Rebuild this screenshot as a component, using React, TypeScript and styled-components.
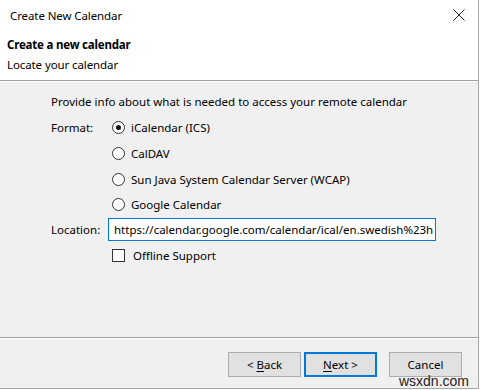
import styled, { createGlobalStyle } from "styled-components";

const GlobalStyle = createGlobalStyle`
  html, body {
    margin: 0;
    padding: 0;
    background: #ffffff;
  }
  body {
    font-family: "Noto Sans", "Open Sans", sans-serif;
    font-size: 11.5px;
    color: #000;
  }
`;

const Window = styled.div`
  position: relative;
  width: 478px;
  height: 388px;
  border-right: 1px solid #a8a8a8;
  border-bottom: 1px solid #a8a8a8;
  background: #f0f0f0;
  display: flex;
  flex-direction: column;
  overflow: hidden;
`;

const TitleBar = styled.div`
  height: 30px;
  background: #fff;
  display: flex;
  align-items: center;
  justify-content: space-between;
  padding: 0 8px 0 10px;
`;

const Title = styled.span`
  letter-spacing: -0.1px;
`;

const CloseButton = styled.div`
  width: 14px;
  height: 14px;
  display: flex;
  align-items: center;
  justify-content: center;
  margin-right: 4px;
`;

const Header = styled.div`
  background: #fff;
  height: 50px;
  padding-left: 7px;
  display: flex;
  flex-direction: column;
  justify-content: center;
  gap: 4px;
  border-bottom: 1px solid #a0a0a0;
  box-shadow: 0 1px 0 #ffffff;
`;

const HeaderLine = styled.div<{ $bold?: boolean }>`
  line-height: 16px;
  font-weight: ${(p) => (p.$bold ? 700 : 400)};
  letter-spacing: ${(p) => (p.$bold ? "-0.2px" : "-0.1px")};
`;

const Body = styled.div`
  flex: 1;
  padding: 13px 0 0 51px;
  display: flex;
  flex-direction: column;
`;

const Intro = styled.div`
  line-height: 16px;
  margin-bottom: 4px;
`;

const FormGrid = styled.div`
  display: grid;
  grid-template-columns: 57px 1fr;
  align-items: center;
`;

const FieldLabel = styled.div<{ $h: number }>`
  height: ${(p) => p.$h}px;
  display: flex;
  align-items: center;
`;

const Option = styled.label<{ $h: number }>`
  height: ${(p) => p.$h}px;
  display: flex;
  align-items: center;
  gap: 6px;
  padding-left: 4px;
`;

const Radio = styled.span<{ $checked?: boolean }>`
  width: 11px;
  height: 11px;
  border: 1px solid #333;
  border-radius: 50%;
  background: #fff;
  display: flex;
  align-items: center;
  justify-content: center;

  &::after {
    content: "";
    width: 5px;
    height: 5px;
    border-radius: 50%;
    background: ${(p) => (p.$checked ? "#111" : "transparent")};
  }
`;

const Checkbox = styled.span`
  width: 11px;
  height: 11px;
  border: 1px solid #333;
  background: #fff;
  margin-right: 2px;
`;

const Input = styled.div`
  width: 321px;
  height: 21px;
  border: 1px solid #0078d7;
  background: #fff;
  display: flex;
  align-items: center;
  padding-left: 5px;
  box-sizing: content-box;
  white-space: nowrap;
  overflow: hidden;
`;

const Footer = styled.div`
  height: 51px;
  border-top: 1px solid #a0a0a0;
  box-shadow: inset 0 1px 0 #ffffff;
  display: flex;
  justify-content: flex-end;
  align-items: flex-start;
  padding: 14px 16px 0 0;
  box-sizing: border-box;
`;

const ButtonGroup = styled.div`
  display: flex;
  gap: 3px;
  margin-right: 12px;
`;

const Button = styled.div<{ $default?: boolean }>`
  width: 73px;
  height: 25px;
  box-sizing: border-box;
  background: #e1e1e1;
  border: ${(p) => (p.$default ? "2px solid #0078d7" : "1px solid #adadad")};
  display: flex;
  align-items: center;
  justify-content: center;

  u {
    text-underline-offset: 2px;
  }
`;

const Watermark = styled.div`
  position: absolute;
  right: 9px;
  bottom: 0;
  font-family: "Liberation Sans", Arial, sans-serif;
  font-size: 14px;
  color: #222;
  line-height: 13px;
`;

const formats = [
  "iCalendar (ICS)",
  "CalDAV",
  "Sun Java System Calendar Server (WCAP)",
  "Google Calendar",
];

export default function App() {
  return (
    <>
      <GlobalStyle />
      <Window>
        <TitleBar>
          <Title>Create New Calendar</Title>
          <CloseButton>
            <svg width="12" height="12" viewBox="0 0 12 12">
              <path d="M0.5 0.5 L11.5 11.5 M11.5 0.5 L0.5 11.5" stroke="#222" strokeWidth="1" />
            </svg>
          </CloseButton>
        </TitleBar>
        <Header>
          <HeaderLine $bold>Create a new calendar</HeaderLine>
          <HeaderLine>Locate your calendar</HeaderLine>
        </Header>
        <Body>
          <Intro>Provide info about what is needed to access your remote calendar</Intro>
          <FormGrid>
            {formats.map((f, i) => (
              <>
                {i === 0 ? <FieldLabel key="fmt" $h={26}>Format:</FieldLabel> : <div key={f + "-l"} />}
                <Option key={f} $h={i === 3 ? 25 : 26}>
                  <Radio $checked={i === 0} />
                  {f}
                </Option>
              </>
            ))}
            <FieldLabel $h={25}>Location:</FieldLabel>
            <Input>https://calendar.google.com/calendar/ical/en.swedish%23h</Input>
            <div />
            <Option $h={26}>
              <Checkbox />
              Offline Support
            </Option>
          </FormGrid>
        </Body>
        <Footer>
          <ButtonGroup>
            <Button>
              &lt;&nbsp;<u>B</u>ack
            </Button>
            <Button $default>
              <u>N</u>ext&nbsp;&gt;
            </Button>
          </ButtonGroup>
          <Button>Cancel</Button>
        </Footer>
        <Watermark>wsxdn.com</Watermark>
      </Window>
    </>
  );
}
